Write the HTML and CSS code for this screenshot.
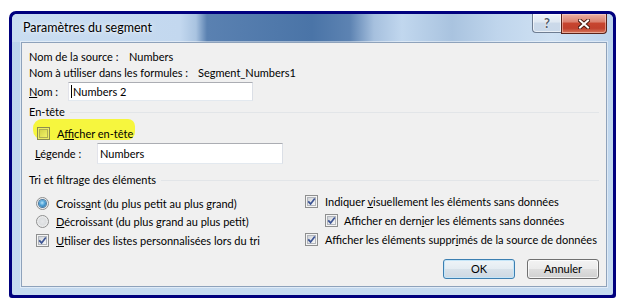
FILE: index.html
```html
<!DOCTYPE html>
<html lang="fr">
<head>
<meta charset="utf-8">
<title>Paramètres du segment</title>
<link rel="stylesheet" href="styles.css">
</head>
<body>
<div class="outer">
  <div class="frame">
    <div class="titlebar">
      <span class="title">Paramètres du segment</span>
      <div class="caption-btns">
        <span class="cbtn help">?</span>
        <span class="cbtn close"><svg class="xicon" width="12" height="10" viewBox="0 0 12 10"><path d="M2 1.5 L10 8.5 M10 1.5 L2 8.5" class="x-out"/><path d="M2 1.5 L10 8.5 M10 1.5 L2 8.5" class="x-in"/></svg></span>
      </div>
    </div>
    <div class="body-wrap">
      <div class="client">
        <div class="line l1"><span class="lbl-src">Nom de la source :</span><span>Numbers</span></div>
        <div class="line l2"><span class="lbl-form">Nom à utiliser dans les formules :</span><span>Segment_Numbers1</span></div>
        <div class="field-row nom-row"><span class="lbl-nom"><u>N</u>om :</span><div class="textbox w-nom"><span class="caret"></span>Numbers 2</div></div>
        <div class="group-title g1"><span>En-tête</span></div>
        <div class="hl-row">
          <span class="highlight">
            <span class="cb hl-cb"><span class="cb-in"></span></span>
            <span class="opt-text">A<u>f</u>ficher en-tête</span>
          </span>
        </div>
        <div class="field-row leg-row"><span class="lbl-leg"><u>L</u>égende :</span><div class="textbox w-leg">Numbers</div></div>
        <div class="group-title g2"><span>Tri et filtrage des éléments</span></div>
        <div class="options">
          <div class="col-left">
            <div class="opt"><span class="radio on"><span class="dot"></span></span><span class="opt-text">Croiss<u>a</u>nt (du plus petit au plus grand)</span></div>
            <div class="opt"><span class="radio"></span><span class="opt-text"><u>D</u>écroissant (du plus grand au plus petit)</span></div>
            <div class="opt"><span class="cb"><span class="cb-in"><svg class="check" width="9" height="9" viewBox="0 0 9 9"><path d="M1.2 4.3 L3.6 6.9 L7.8 1.4"/></svg></span></span><span class="opt-text"><u>U</u>tiliser des listes personnalisées lors du tri</span></div>
          </div>
          <div class="col-right">
            <div class="opt r"><span class="cb"><span class="cb-in"><svg class="check" width="9" height="9" viewBox="0 0 9 9"><path d="M1.2 4.3 L3.6 6.9 L7.8 1.4"/></svg></span></span><span class="opt-text">Indiquer <u>v</u>isuellement les éléments sans données</span></div>
            <div class="opt r indent"><span class="cb"><span class="cb-in"><svg class="check" width="9" height="9" viewBox="0 0 9 9"><path d="M1.2 4.3 L3.6 6.9 L7.8 1.4"/></svg></span></span><span class="opt-text">Afficher en dern<u>i</u>er les éléments sans données</span></div>
            <div class="opt r"><span class="cb"><span class="cb-in"><svg class="check" width="9" height="9" viewBox="0 0 9 9"><path d="M1.2 4.3 L3.6 6.9 L7.8 1.4"/></svg></span></span><span class="opt-text">Afficher les éléments suppr<u>i</u>més de la source de données</span></div>
          </div>
        </div>
        <div class="buttons">
          <button class="btn default">OK</button>
          <button class="btn">Annuler</button>
        </div>
      </div>
    </div>
  </div>
</div>
</body>
</html>
```
FILE: styles.css
```css
* { box-sizing: border-box; }
html, body { margin: 0; padding: 0; background: #fff; }
body {
  font-family: Lato, "Open Sans", sans-serif;
  font-size: 11px;
  color: #000;
}
u { text-decoration: underline; text-underline-offset: 1px; }

.outer {
  margin: 11px 0 0 9px;
  width: 607px;
  height: 287px;
  border: 3px solid #00007e;
  border-radius: 7px 7px 3px 3px;
  background: #00007e;
}
.frame {
  height: 100%;
  display: flex;
  flex-direction: column;
  background: linear-gradient(#bcd4ec, #c6dbf0);
  border-radius: 5px 5px 2px 2px;
  overflow: hidden;
}
.titlebar {
  height: 28px;
  flex: none;
  display: flex;
  align-items: flex-start;
  background: linear-gradient(90deg, #c9ddf1 0, #c3d8ef 168px, #a9c3e0 184px, #5a81b1 195px, #4a74a7 300px, #5d83b2 338px, #a6c0de 362px, #c1d7ee 390px, #a9c3df 440px, #bfd5ec 485px, #cfe1f3 540px, #bcd3ec 601px);
}
.title {
  font-size: 12.5px;
  line-height: 28px;
  padding-left: 11px;
  color: #000;
  text-shadow: 0 0 6px rgba(255,255,255,0.9), 0 0 3px rgba(255,255,255,0.7);
}
.caption-btns {
  margin-left: auto;
  margin-right: 6px;
  display: flex;
  align-items: flex-start;
}
.cbtn {
  display: flex;
  align-items: center;
  justify-content: center;
}
.help {
  width: 29px;
  height: 19px;
  border: 1px solid #6e7d92;
  border-top: none;
  border-right: none;
  border-radius: 0 0 0 4px;
  background: linear-gradient(#eef3f9 0, #dfe8f2 45%, #cbd9e9 50%, #c9d8e9 100%);
  font-weight: 700;
  font-size: 13px;
  color: #525c6a;
  text-shadow: 0 0 2px #fff, 0 0 1px #fff;
  box-shadow: inset 0 0 0 1px rgba(255,255,255,0.6);
}
.close {
  width: 46px;
  height: 20px;
  border: 1px solid #5a231a;
  border-top: none;
  border-radius: 0 0 4px 0;
  background: linear-gradient(#eab1a4 0, #dc8270 40%, #c7452f 50%, #c1412d 75%, #d5765c 100%);
  box-shadow: inset 0 0 0 1px rgba(255,220,210,0.5);
}
.x-out { stroke: #4c1c14; stroke-width: 4; fill: none; stroke-linecap: square; }
.x-in { stroke: #fff; stroke-width: 2; fill: none; stroke-linecap: square; }

.body-wrap {
  flex: 1;
  display: flex;
  padding: 0 6px 8px 9px;
  min-width: 0;
}
.client {
  flex: 1;
  min-width: 0;
  background: #f0f0f0;
  border: 1px solid #8ea2bb;
  box-shadow: 0 0 0 1px rgba(255,255,255,0.45);
  padding: 6px 7px 0 7px;
  display: flex;
  flex-direction: column;
}
.line { display: flex; white-space: nowrap; }
.l1 { height: 16px; line-height: 16px; }
.l2 { height: 15px; line-height: 15px; }
.lbl-src { width: 100px; flex: none; }
.lbl-form { width: 169px; flex: none; }

.field-row { display: flex; align-items: center; }
.nom-row { margin-top: 2px; height: 19px; }
.lbl-nom { width: 39px; flex: none; }
.leg-row { margin-top: 3px; height: 21px; padding-left: 6px; }
.lbl-leg { width: 62px; flex: none; }

.textbox {
  height: 100%;
  display: flex;
  align-items: center;
  background: #fff;
  border: 1px solid;
  border-color: #abadb3 #dbdfe6 #e3e9ef #e2e3ea;
  padding-left: 2px;
  white-space: nowrap;
}
.w-nom { width: 185px; }
.w-leg { width: 186px; }
.caret {
  display: inline-block;
  width: 1px;
  height: 13px;
  background: #000;
  margin-right: 1px;
}

.group-title {
  display: flex;
  align-items: center;
  height: 16px;
  line-height: 16px;
}
.group-title::after {
  content: "";
  flex: 1;
  height: 1px;
  margin-left: 5px;
  background: #e2e5e8;
}
.g1 { margin-top: 3px; }
.g2 { margin-top: 8px; }

.hl-row {
  margin-top: -1px;
  height: 21px;
  display: flex;
}
.highlight {
  margin-left: 4px;
  height: 21px;
  padding: 7px 2px 0 4px;
  display: flex;
  align-items: center;
  gap: 7px;
  background: #f6f63e;
  border-radius: 9px 7px 8px 10px;
}

.cb {
  flex: none;
  width: 13px;
  height: 13px;
  border: 1px solid #8e8f8f;
  background: #f4f4f4;
  display: flex;
  align-items: center;
  justify-content: center;
}
.cb-in {
  width: 9px;
  height: 9px;
  border: 1px solid #b2b6bc;
  background: linear-gradient(135deg, #d0d3d8, #f8f8f8);
  display: flex;
  align-items: center;
  justify-content: center;
}
.check { overflow: visible; flex: none; }
.check path { fill: none; stroke: #3c5494; stroke-width: 1.7; }
.hl-cb { border-color: #8c8c4e; background: #eded62; }
.hl-cb .cb-in { border-color: #afaf52; background: linear-gradient(135deg, #d3d34a, #f2f266); }

.radio {
  flex: none;
  width: 13px;
  height: 13px;
  border-radius: 50%;
  border: 1px solid #8e8f8f;
  background: radial-gradient(circle at 50% 50%, #e6e7e9 0, #dcdee0 45%, #f4f4f4 75%);
  display: flex;
  align-items: center;
  justify-content: center;
}
.dot {
  width: 7px;
  height: 7px;
  border-radius: 50%;
  background: radial-gradient(circle at 45% 40%, #b8e4fa 0, #4fa3d8 45%, #1b5f95 100%);
  box-shadow: 0 0 0 1px #4a7ba3;
}

.options {
  margin-top: 4px;
  display: flex;
}
.col-left {
  width: 276px;
  flex: none;
  padding: 2px 0 0 7px;
}
.col-left .opt { height: 18.5px; }
.col-right .opt { height: 19px; }
.opt {
  display: flex;
  align-items: center;
  gap: 7px;
  white-space: nowrap;
}
.opt.indent { padding-left: 20px; gap: 6px; }

.buttons {
  margin-top: 9px;
  display: flex;
  justify-content: flex-end;
  gap: 12px;
}
.btn {
  width: 72px;
  height: 20px;
  font: inherit;
  color: #000;
  border: 1px solid #707070;
  border-radius: 3px;
  background: linear-gradient(#f3f3f3 0, #ebebeb 50%, #dedede 50%, #d0d0d0 100%);
  box-shadow: inset 0 0 0 1px rgba(255,255,255,0.75);
  padding: 0;
}
.btn.default {
  border-color: #3c7fb1;
  background: linear-gradient(#eef4f8 0, #e4ecf2 50%, #d8e2ea 50%, #cdd8e2 100%);
  box-shadow: inset 0 0 0 1px #c4e5f8;
}
```
